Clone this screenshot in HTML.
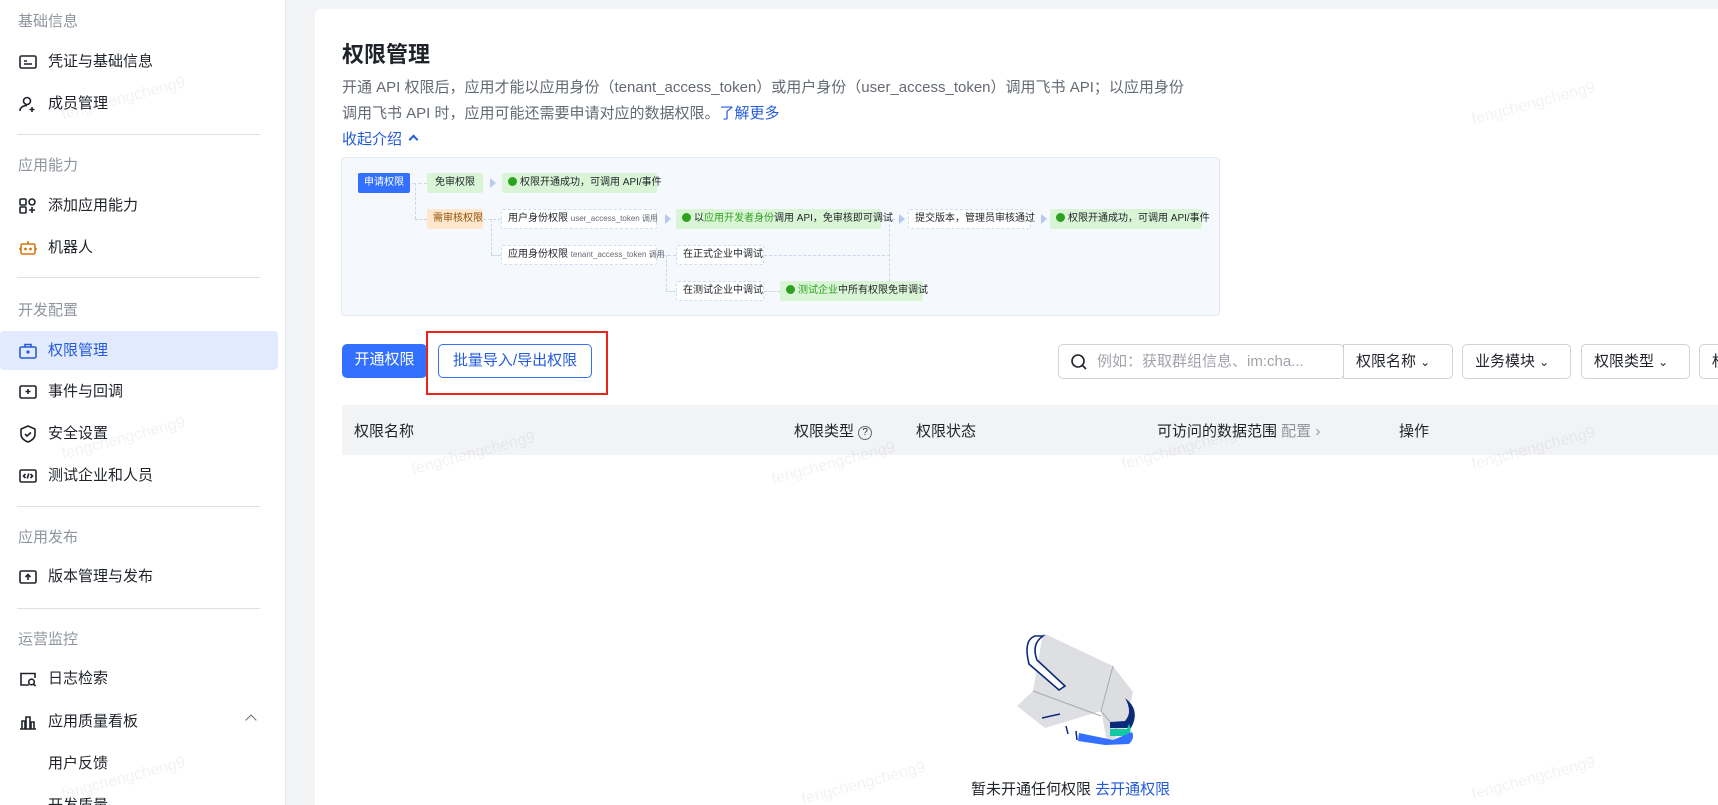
<!DOCTYPE html>
<html style="width:1718px;height:805px;overflow:hidden"><head><meta charset="utf-8"><style>
*{margin:0;padding:0;box-sizing:border-box}
body{width:1718px;height:805px;overflow:hidden;background:#f2f3f5;font-family:"Liberation Sans","Noto Sans CJK SC",sans-serif;color:#1f2329;position:relative}
.side{position:absolute;left:0;top:0;width:286px;height:805px;background:#fff;border-right:1px solid #e4e6ea}
.grp{position:absolute;left:18px;font-size:15px;color:#8f959e}
.it{position:absolute;left:18px;font-size:15px;color:#1f2329;height:24px;line-height:24px;display:flex;align-items:center}
.it svg{width:20px;height:20px;margin-right:10px;flex:none}
.it.sub{left:48px}
.div{position:absolute;left:17px;width:243px;height:1px;background:#dee0e3}
.act{position:absolute;left:0;top:331px;width:278px;height:39px;background:#e1eaff;border-radius:4px}
.card{position:absolute;left:315px;top:9px;width:1403px;height:796px;background:#fff;border-radius:6px 0 0 0}
.ab{position:absolute}
.t{font-size:22px;font-weight:bold;left:342px;top:37px}
.desc{left:342px;top:75px;font-size:15px;color:#646a73;line-height:26px;width:862px}
.blue{color:#245bdb}
.dg{left:341px;top:157px;width:879px;height:159px;background:#f5f9fd;border:1px solid #e4e9f0;border-radius:4px}
.b{position:absolute;font-size:10px;height:20px;line-height:20px;padding:0 6px;border-radius:2px;white-space:nowrap}
.gr{background:#d9f5d6;color:#1f2329}
.ds{background:#fff;border:1px dashed #cfdcf2;line-height:18px}
.ok{display:inline-block;width:9px;height:9px;border-radius:50%;background:#2ea121;vertical-align:-1px;margin-right:3px}
.ln{position:absolute;border-color:#c8d6ee;border-style:dashed;border-width:0}
.ar{position:absolute;width:0;height:0;border-left:6px solid #b7c9ef;border-top:5px solid transparent;border-bottom:5px solid transparent}
.btn{position:absolute;height:34px;line-height:32px;font-size:15px;border-radius:5px;text-align:center}
.dd{position:absolute;top:344px;height:35px;border:1px solid #d0d3d6;border-radius:5px;font-size:15px;line-height:33px;padding-left:12px;background:#fff;white-space:nowrap;overflow:hidden}
.th{position:absolute;top:405px;left:342px;width:1376px;height:50px;background:#f2f3f5}
.th > span{position:absolute;top:15px;font-size:15px;color:#1f2329;white-space:nowrap}
.wm{position:absolute;font-size:16px;color:rgba(0,0,0,0.05);transform:rotate(-15deg);white-space:nowrap}
</style></head><body>
<div class="side">
<div class="grp" style="top:10px">基础信息</div>
<div class="it" style="top:50px"><svg viewBox="0 0 20 20" fill="none" stroke="#1f2329" stroke-width="1.6"><rect x="2" y="4" width="16" height="12" rx="1.5"/><path d="M6 9h3M6 12h8"/></svg>凭证与基础信息</div>
<div class="it" style="top:92px"><svg viewBox="0 0 20 20" fill="none" stroke="#1f2329" stroke-width="1.6"><circle cx="9" cy="7" r="3.5"/><path d="M2 17c0-3.5 3-5.5 7-5.5M14 13v5M11.5 15.5h5"/></svg>成员管理</div>
<div class="div" style="top:134px"></div>
<div class="grp" style="top:154px">应用能力</div>
<div class="it" style="top:194px"><svg viewBox="0 0 20 20" fill="none" stroke="#1f2329" stroke-width="1.6"><rect x="2" y="3" width="6" height="6" rx="1"/><rect x="2" y="11" width="6" height="6" rx="1"/><circle cx="14" cy="6" r="3"/><path d="M14 11v6M11 14h6"/></svg>添加应用能力</div>
<div class="it" style="top:236px"><svg viewBox="0 0 20 20" fill="none" stroke="#d9730d" stroke-width="1.6"><rect x="3" y="6" width="14" height="10" rx="1.5"/><path d="M10 3v3M1 11h2M17 11h2"/><circle cx="7.5" cy="11" r=".6" fill="#d9730d"/><circle cx="12.5" cy="11" r=".6" fill="#d9730d"/></svg>机器人</div>
<div class="div" style="top:277px"></div>
<div class="grp" style="top:299px">开发配置</div>
<div class="act"></div>
<div class="it" style="top:339px;color:#245bdb"><svg viewBox="0 0 20 20" fill="none" stroke="#245bdb" stroke-width="1.6"><rect x="2" y="6" width="16" height="11" rx="1.5"/><path d="M7 6V3.5h6V6"/><circle cx="10" cy="11" r=".8" fill="#245bdb"/></svg>权限管理</div>
<div class="it" style="top:380px"><svg viewBox="0 0 20 20" fill="none" stroke="#1f2329" stroke-width="1.6"><rect x="2" y="4" width="16" height="12" rx="1.5"/><path d="M10 7v5M7.5 9.5h5"/></svg>事件与回调</div>
<div class="it" style="top:422px"><svg viewBox="0 0 20 20" fill="none" stroke="#1f2329" stroke-width="1.6"><path d="M10 2l7 3v5c0 4-3 6.5-7 8-4-1.5-7-4-7-8V5z"/><path d="M7 10l2 2 4-3.5"/></svg>安全设置</div>
<div class="it" style="top:464px"><svg viewBox="0 0 20 20" fill="none" stroke="#1f2329" stroke-width="1.6"><rect x="2" y="4" width="16" height="12" rx="1.5"/><path d="M7.5 8l-2 2 2 2M12.5 8l2 2-2 2M10.8 7.5l-1.6 5"/></svg>测试企业和人员</div>
<div class="div" style="top:506px"></div>
<div class="grp" style="top:526px">应用发布</div>
<div class="it" style="top:565px"><svg viewBox="0 0 20 20" fill="none" stroke="#1f2329" stroke-width="1.6"><rect x="2" y="4" width="16" height="12" rx="1.5"/><path d="M10 13V7.5M7.5 10l2.5-2.5 2.5 2.5"/></svg>版本管理与发布</div>
<div class="div" style="top:608px"></div>
<div class="grp" style="top:628px">运营监控</div>
<div class="it" style="top:667px"><svg viewBox="0 0 20 20" fill="none" stroke="#1f2329" stroke-width="1.6"><path d="M17 9V4.5H3v11.5h8"/><circle cx="13.5" cy="13" r="2.8"/><path d="M15.5 15l2 2"/></svg>日志检索</div>
<div class="it" style="top:710px"><svg viewBox="0 0 20 20" fill="none" stroke="#1f2329" stroke-width="1.6"><path d="M2 17h16M4 17V9h3v8M8 17V5h4v12M13 17v-7h3v7"/></svg>应用质量看板</div>
<div class="ab" style="left:247px;top:716px;width:8px;height:8px;border-left:1.5px solid #646a73;border-top:1.5px solid #646a73;transform:rotate(45deg)"></div>
<div class="it sub" style="top:752px">用户反馈</div>
<div class="it sub" style="top:794px">开发质量</div>
</div>
<div class="card"></div>
<div class="ab t">权限管理</div>
<div class="ab desc">开通 API 权限后，应用才能以应用身份（tenant_access_token）或用户身份（user_access_token）调用飞书 API；以应用身份<br>调用飞书 API 时，应用可能还需要申请对应的数据权限。<span class="blue">了解更多</span></div>
<div class="ab blue" style="left:342px;top:128px;font-size:15px">收起介绍 <span style="display:inline-block;width:7px;height:7px;border-left:2px solid #245bdb;border-top:2px solid #245bdb;transform:rotate(45deg);margin-left:4px;vertical-align:1px"></span></div>
<div class="ab dg"></div>
<div class="ln" style="left:407px;top:183px;width:20px;border-top-width:1px"></div>
<div class="ln" style="left:415px;top:183px;height:36px;border-left-width:1px"></div>
<div class="ln" style="left:415px;top:219px;width:12px;border-top-width:1px"></div>
<div class="ln" style="left:483px;top:219px;width:18px;border-top-width:1px"></div>
<div class="ln" style="left:491px;top:219px;height:36px;border-left-width:1px"></div>
<div class="ln" style="left:491px;top:255px;width:10px;border-top-width:1px"></div>
<div class="ln" style="left:657px;top:255px;width:19px;border-top-width:1px"></div>
<div class="ln" style="left:666px;top:255px;height:36px;border-left-width:1px"></div>
<div class="ln" style="left:666px;top:291px;width:10px;border-top-width:1px"></div>
<div class="ln" style="left:764px;top:291px;width:16px;border-top-width:1px"></div>
<div class="ln" style="left:764px;top:255px;width:126px;border-top-width:1px"></div>
<div class="ln" style="left:889px;top:219px;height:72px;border-left-width:1px"></div>
<div class="ln" style="left:881px;top:219px;width:20px;border-top-width:1px"></div>
<div class="ar" style="left:490px;top:178px"></div>
<div class="ar" style="left:665px;top:214px"></div>
<div class="ar" style="left:899px;top:214px"></div>
<div class="ar" style="left:1041px;top:214px"></div>
<div class="b" style="left:358px;top:173px;background:#3370ff;color:#fff">申请权限</div>
<div class="b gr" style="left:427px;top:173px;width:56px;text-align:center">免审权限</div>
<div class="b gr" style="left:502px;top:173px;width:155px"><span class="ok"></span>权限开通成功，可调用 API/事件</div>
<div class="b" style="left:427px;top:209px;width:56px;text-align:center;background:#fee7cd;color:#8f4f04">需审核权限</div>
<div class="b ds" style="left:501px;top:209px;width:156px">用户身份权限 <span style="font-size:8px;color:#646a73">user_access_token 调用</span></div>
<div class="b gr" style="left:676px;top:209px;width:205px"><span class="ok"></span>以<span style="color:#2ea121">应用开发者身份</span>调用 API，免审核即可调试</div>
<div class="b ds" style="left:908px;top:209px;width:123px">提交版本，管理员审核通过</div>
<div class="b gr" style="left:1050px;top:209px;width:152px"><span class="ok"></span>权限开通成功，可调用 API/事件</div>
<div class="b ds" style="left:501px;top:245px;width:156px">应用身份权限 <span style="font-size:8px;color:#646a73">tenant_access_token 调用</span></div>
<div class="b ds" style="left:676px;top:245px;width:88px">在正式企业中调试</div>
<div class="b ds" style="left:676px;top:281px;width:88px">在测试企业中调试</div>
<div class="b gr" style="left:780px;top:281px;width:143px"><span class="ok"></span><span style="color:#2ea121">测试企业</span>中所有权限免审调试</div>
<div class="btn" style="left:342px;top:344px;width:85px;background:#3370ff;color:#fff">开通权限</div>
<div class="btn" style="left:438px;top:344px;width:154px;border:1px solid #3370ff;color:#245bdb">批量导入/导出权限</div>
<div class="ab" style="left:426px;top:331px;width:182px;height:64px;border:2px solid #e8251b"></div>
<div class="dd" style="left:1058px;width:286px;color:#a0a4aa;padding-left:38px"><svg style="position:absolute;left:11px;top:8px" width="18" height="18" viewBox="0 0 18 18" fill="none" stroke="#1f2329" stroke-width="1.6"><circle cx="8" cy="8" r="6"/><path d="M12.5 12.5l3.5 3.5"/></svg>例如：获取群组信息、im:cha...</div>
<div class="dd" style="left:1343px;width:110px;border-radius:0 5px 5px 0">权限名称 <span style="font-size:12px">⌄</span></div>
<div class="dd" style="left:1462px;width:109px">业务模块 <span style="font-size:12px">⌄</span></div>
<div class="dd" style="left:1581px;width:109px">权限类型 <span style="font-size:12px">⌄</span></div>
<div class="dd" style="left:1699px;width:60px">权</div>
<div class="th"><span style="left:12px">权限名称</span><span style="left:452px">权限类型 <span style="display:inline-block;width:14px;height:14px;border:1.3px solid #646a73;border-radius:50%;font-size:10px;line-height:12px;text-align:center;vertical-align:1px">?</span></span><span style="left:574px">权限状态</span><span style="left:815px">可访问的数据范围 <span style="color:#8f959e">配置 ›</span></span><span style="left:1057px">操作</span></div>
<svg class="ab" style="left:1015px;top:628px" width="130" height="125" viewBox="0 0 130 125">
<path d="M28 5 L98 38 L86 83 L30 100 L2 78 L18 63 Z" fill="#dedfe2"/>
<path d="M98 38 L118 64 L110 100 L93 118 L86 83 Z" fill="#dcdde0"/>
<path d="M18 63 L86 88 M98 38 L86 83 L102 102" stroke="#a8aaad" stroke-width="1" fill="none"/>
<path d="M20 8 Q8 12 14 36 L44 62 L50 58 L22 32 Q16 16 28 8 Z" fill="#fff" stroke="#0d2a7a" stroke-width="1.6"/>
<path d="M110 70 Q126 82 116 100 L95 100 L95 94 L110 93 Q118 84 110 70Z" fill="#0d2a7a"/>
<path d="M114 96 Q118 104 112 108 L95 108 L95 101 L112 101 Z" fill="#10c9a4"/>
<path d="M63 113 L90 117 L114 116 Q120 110 117 104 L98 112 L64 105 Z" fill="#3370ff"/>
<path d="M27 90 L45 86 M51 98 L53 106 M61 103 L62 112" stroke="#0d2a7a" stroke-width="1.5"/>
</svg>
<div class="ab" style="left:971px;top:778px;font-size:15px;color:#1f2329">暂未开通任何权限 <span class="blue">去开通权限</span></div>
<div class="wm" style="left:60px;top:90px">fengchengcheng9</div>
<div class="wm" style="left:60px;top:430px">fengchengcheng9</div>
<div class="wm" style="left:60px;top:770px">fengchengcheng9</div>
<div class="wm" style="left:410px;top:445px">fengchengcheng9</div>
<div class="wm" style="left:770px;top:455px">fengchengcheng9</div>
<div class="wm" style="left:1120px;top:440px">fengchengcheng9</div>
<div class="wm" style="left:1470px;top:440px">fengchengcheng9</div>
<div class="wm" style="left:1470px;top:95px">fengchengcheng9</div>
<div class="wm" style="left:800px;top:775px">fengchengcheng9</div>
<div class="wm" style="left:1470px;top:770px">fengchengcheng9</div>
</body></html>
